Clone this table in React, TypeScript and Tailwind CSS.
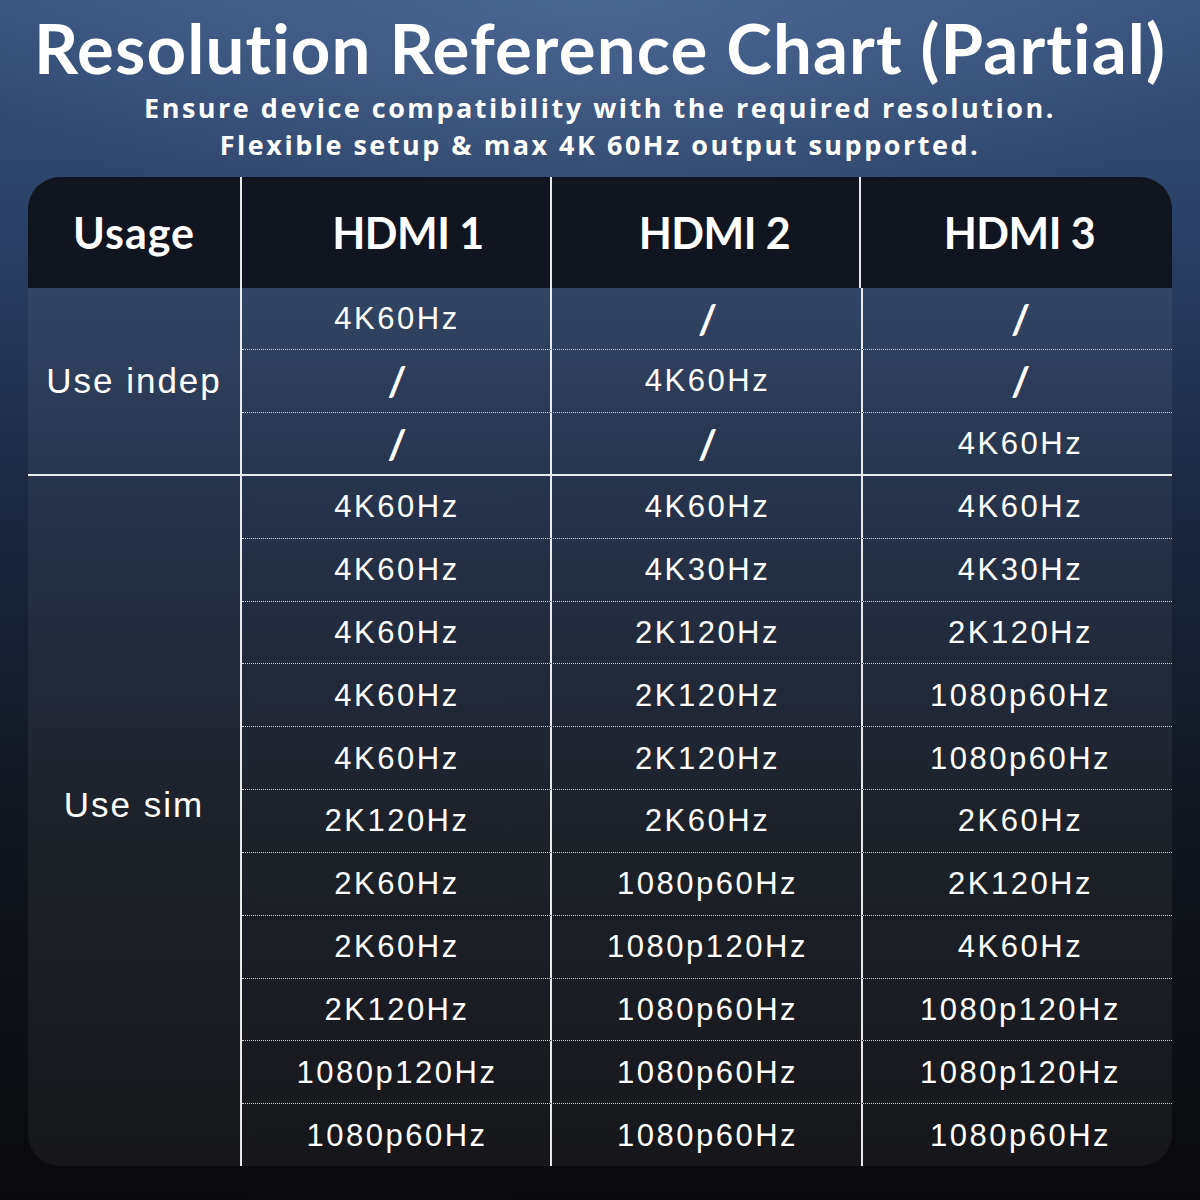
const indep = [
  ["4K60Hz", "/", "/"],
  ["/", "4K60Hz", "/"],
  ["/", "/", "4K60Hz"],
];

const sim = [
  ["4K60Hz", "4K60Hz", "4K60Hz"],
  ["4K60Hz", "4K30Hz", "4K30Hz"],
  ["4K60Hz", "2K120Hz", "2K120Hz"],
  ["4K60Hz", "2K120Hz", "1080p60Hz"],
  ["4K60Hz", "2K120Hz", "1080p60Hz"],
  ["2K120Hz", "2K60Hz", "2K60Hz"],
  ["2K60Hz", "1080p60Hz", "2K120Hz"],
  ["2K60Hz", "1080p120Hz", "4K60Hz"],
  ["2K120Hz", "1080p60Hz", "1080p120Hz"],
  ["1080p120Hz", "1080p60Hz", "1080p120Hz"],
  ["1080p60Hz", "1080p60Hz", "1080p60Hz"],
];

const geo = { fontFamily: "Lato, 'Open Sans', sans-serif" };
const sub = { fontFamily: "'Open Sans', Lato, sans-serif" };
const helv = { fontFamily: "'Liberation Sans', Arial, sans-serif" };

const headers = [
  { label: "Usage", cls: "tracking-[1px]" },
  { label: "HDMI 1", cls: "tracking-[-0.5px] pl-[24px] border-l-2 border-white/90" },
  { label: "HDMI 2", cls: "tracking-[-0.5px] pl-[18px] border-l-2 border-white/90" },
  { label: "HDMI 3", cls: "tracking-[-0.5px] pl-[6px] border-l-2 border-white/90" },
];

function Cell({ value, first, last }: { value: string; first?: boolean; last?: boolean }) {
  const slash = value === "/";
  return (
    <div
      className={`flex items-center justify-center text-white ${first ? "" : "border-l-2 border-white/90"} ${last ? "pl-[6px]" : "pl-[2px]"}`}
    >
      {slash ? (
        <span className="text-[41px] font-bold leading-none" style={geo}>
          /
        </span>
      ) : (
        <span className="text-[31px] tracking-[2.5px] leading-none" style={helv}>
          {value}
        </span>
      )}
    </div>
  );
}

function Section({
  label,
  rows,
  height,
  labelClass,
}: {
  label: string;
  rows: string[][];
  height: string;
  labelClass: string;
}) {
  return (
    <div className={`flex ${height}`}>
      <div className="w-[212px] flex items-center justify-center">
        <span className={`text-[35px] tracking-[2px] text-white ${labelClass}`} style={helv}>
          {label}
        </span>
      </div>
      <div className="flex-1 flex flex-col border-l-2 border-white/90">
        {rows.map((r, i) => (
          <div
            key={i}
            className={`flex-1 grid grid-cols-[308px_311px_311px] ${i === 0 ? "" : "border-t border-dotted border-white/80"}`}
          >
            <Cell value={r[0]} first />
            <Cell value={r[1]} />
            <Cell value={r[2]} last />
          </div>
        ))}
      </div>
    </div>
  );
}

export default function App() {
  return (
    <div className="w-[1200px] h-[1200px] overflow-hidden flex flex-col items-center pt-[12px] bg-[radial-gradient(ellipse_55%_22%_at_50%_0%,rgba(95,125,170,0.45),transparent),linear-gradient(180deg,#3a5480_0%,#2a3f63_20%,#1b2841_42%,#11161f_68%,#0a0a0d_100%)]">
      <h1 className="text-[69px] font-bold leading-[71px] text-white tracking-[1.1px]" style={geo}>
        Resolution Reference Chart (Partial)
      </h1>
      <p
        className="mt-[6px] text-[27px] font-bold leading-[37px] text-white text-center tracking-[2.5px]"
        style={sub}
      >
        Ensure device compatibility with the required resolution.
        <br />
        Flexible setup &amp; max 4K 60Hz output supported.
      </p>

      <div className="mt-[14px] w-[1144px] rounded-[32px] overflow-hidden bg-white/[0.05]">
        <div className="grid grid-cols-[212px_310px_309px_313px] h-[111px] bg-[#11151f] text-white">
          {headers.map((h) => (
            <div key={h.label} className={`flex items-center justify-center ${h.cls}`}>
              <span className="text-[43px] font-bold leading-none" style={geo}>
                {h.label}
              </span>
            </div>
          ))}
        </div>
        <Section label="Use indep" rows={indep} height="h-[186px]" labelClass="" />
        <div className="h-[2px] bg-white/90" />
        <Section label="Use sim" rows={sim} height="h-[690px]" labelClass="mb-8" />
      </div>
    </div>
  );
}
